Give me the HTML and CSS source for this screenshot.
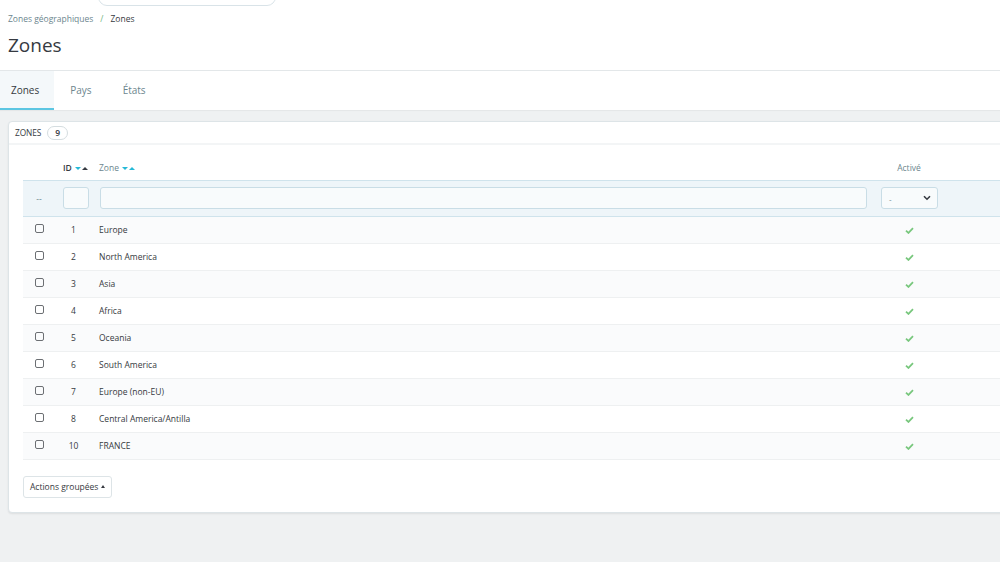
FILE: index.html
```html
<!DOCTYPE html>
<html lang="fr">
<head>
<meta charset="utf-8">
<title>Zones</title>
<link rel="stylesheet" href="styles.css">
</head>
<body>
<header class="page-head">
  <div class="topbar"><div class="search"></div></div>
  <nav class="breadcrumb"><span class="crumb">Zones géographiques</span><span class="sep">/</span><span class="crumb current">Zones</span></nav>
  <h1 class="title">Zones</h1>
</header>
<div class="tabs">
  <a class="tab active">Zones</a>
  <a class="tab">Pays</a>
  <a class="tab">États</a>
</div>
<main class="content">
  <section class="panel">
    <div class="panel-heading">ZONES <span class="badge">9</span></div>
    <table class="grid">
      <colgroup>
        <col class="c-check"><col class="c-id"><col class="c-zone"><col class="c-active"><col class="c-rest">
      </colgroup>
      <thead>
        <tr class="head-row">
          <th></th>
          <th class="th-id"><b>ID</b> <span class="sort"><i class="down"></i><i class="up dark"></i></span></th>
          <th class="th-zone">Zone <span class="sort"><i class="down"></i><i class="up"></i></span></th>
          <th class="th-center">Activé</th>
          <th></th>
        </tr>
        <tr class="filter-row">
          <td class="center muted">--</td>
          <td><div class="input small"></div></td>
          <td><div class="input"></div></td>
          <td><div class="select"><span>-</span><svg width="8" height="6" viewBox="0 0 8 6"><path d="M1 1.2 L4 4.2 L7 1.2" fill="none" stroke="#363a41" stroke-width="1.6"/></svg></div></td>
          <td></td>
        </tr>
      </thead>
      <tbody>
        <tr><td class="center"><span class="cb"></span></td><td class="center">1</td><td>Europe</td><td class="center"><svg class="ok" viewBox="0 0 10 8"><path d="M1 4.2 L3.8 6.8 L9 1.4" fill="none" stroke="#78c77d" stroke-width="2"/></svg></td><td></td></tr>
        <tr><td class="center"><span class="cb"></span></td><td class="center">2</td><td>North America</td><td class="center"><svg class="ok" viewBox="0 0 10 8"><path d="M1 4.2 L3.8 6.8 L9 1.4" fill="none" stroke="#78c77d" stroke-width="2"/></svg></td><td></td></tr>
        <tr><td class="center"><span class="cb"></span></td><td class="center">3</td><td>Asia</td><td class="center"><svg class="ok" viewBox="0 0 10 8"><path d="M1 4.2 L3.8 6.8 L9 1.4" fill="none" stroke="#78c77d" stroke-width="2"/></svg></td><td></td></tr>
        <tr><td class="center"><span class="cb"></span></td><td class="center">4</td><td>Africa</td><td class="center"><svg class="ok" viewBox="0 0 10 8"><path d="M1 4.2 L3.8 6.8 L9 1.4" fill="none" stroke="#78c77d" stroke-width="2"/></svg></td><td></td></tr>
        <tr><td class="center"><span class="cb"></span></td><td class="center">5</td><td>Oceania</td><td class="center"><svg class="ok" viewBox="0 0 10 8"><path d="M1 4.2 L3.8 6.8 L9 1.4" fill="none" stroke="#78c77d" stroke-width="2"/></svg></td><td></td></tr>
        <tr><td class="center"><span class="cb"></span></td><td class="center">6</td><td>South America</td><td class="center"><svg class="ok" viewBox="0 0 10 8"><path d="M1 4.2 L3.8 6.8 L9 1.4" fill="none" stroke="#78c77d" stroke-width="2"/></svg></td><td></td></tr>
        <tr><td class="center"><span class="cb"></span></td><td class="center">7</td><td>Europe (non-EU)</td><td class="center"><svg class="ok" viewBox="0 0 10 8"><path d="M1 4.2 L3.8 6.8 L9 1.4" fill="none" stroke="#78c77d" stroke-width="2"/></svg></td><td></td></tr>
        <tr><td class="center"><span class="cb"></span></td><td class="center">8</td><td>Central America/Antilla</td><td class="center"><svg class="ok" viewBox="0 0 10 8"><path d="M1 4.2 L3.8 6.8 L9 1.4" fill="none" stroke="#78c77d" stroke-width="2"/></svg></td><td></td></tr>
        <tr><td class="center"><span class="cb"></span></td><td class="center">10</td><td>FRANCE</td><td class="center"><svg class="ok" viewBox="0 0 10 8"><path d="M1 4.2 L3.8 6.8 L9 1.4" fill="none" stroke="#78c77d" stroke-width="2"/></svg></td><td></td></tr>
      </tbody>
    </table>
    <div class="bulk"><button class="btn">Actions groupées <span class="caret"></span></button></div>
  </section>
</main>
</body>
</html>
```
FILE: styles.css
```css
* { box-sizing: border-box; }
html, body { margin: 0; padding: 0; }
body {
  width: 1000px;
  height: 562px;
  overflow: hidden;
  background: #eff1f2;
  font-family: "Open Sans", "Noto Sans", sans-serif;
  color: #363a41;
  font-size: 8.5px;
}
.page-head {
  background: #fff;
  border-bottom: 1px solid #e3e7e9;
  padding: 0 0 13px 8px;
  height: 71px;
}
.topbar {
  height: 6px;
  overflow: hidden;
  display: flex;
  align-items: flex-end;
  padding-left: 90px;
}
.search {
  flex-shrink: 0;
  width: 178px;
  height: 26px;
  border: 1px solid #d9e3e8;
  border-radius: 9px;
  background: #fff;
}
.breadcrumb {
  margin-top: 7px;
  height: 12px;
  line-height: 12px;
  font-size: 8.5px;
  color: #6c868e;
  display: flex;
  align-items: center;
}
.breadcrumb .sep { color: #70b580; margin: 0 7px 0 7px; }
.breadcrumb .current { color: #363a41; }
.title {
  margin: 8px 0 0;
  font-size: 19px;
  line-height: 24px;
  font-weight: 400;
  color: #363a41;
}
.tabs {
  background: #fff;
  height: 39px;
  display: flex;
  box-shadow: 0 1px 1px rgba(0,0,0,0.04);
}
.tab {
  display: flex;
  align-items: center;
  padding: 0 15px;
  font-size: 10px;
  color: #6c868e;
  border-bottom: 2px solid transparent;
}
.tab:first-child { padding: 0 15px 0 11px; }
.tab:nth-child(2) { padding: 0 16px 0 16px; }
.tab.active {
  background: #f4f8fa;
  color: #363a41;
  border-bottom-color: #5cc6e2;
}
.content { padding: 11px 0 0 8px; }
.panel {
  width: 1012px;
  background: #fff;
  border: 1px solid #dde4e7;
  border-radius: 4px;
  box-shadow: 0 1px 2px rgba(0,0,0,0.08);
  padding: 0 15px 14px 14px;
}
.panel-heading {
  height: 23px;
  margin: 0 -15px 0 -14px;
  padding: 0 6px;
  display: flex;
  align-items: center;
  border-bottom: 2px solid #f3f5f6;
  font-size: 8.3px;
  font-weight: 400;
  letter-spacing: -0.1px;
  color: #363a41;
}
.badge {
  display: inline-flex;
  align-items: center;
  justify-content: center;
  margin-left: 6px;
  width: 21px;
  height: 14px;
  border: 1px solid #d5dde0;
  border-radius: 8px;
  font-weight: 600;
  font-size: 8.5px;
}
.grid {
  margin-top: 10px;
  width: 100%;
  table-layout: fixed;
  border-collapse: collapse;
}
.c-check { width: 32px; }
.c-id { width: 37px; }
.c-zone { width: 781px; }
.c-active { width: 72px; }
.grid th, .grid td { padding: 0 8px; text-align: left; font-weight: 400; white-space: nowrap; }
.head-row th { height: 25px; color: #6c868e; font-size: 8.5px; }
.th-id { padding-left: 8px !important; }
.th-id b { color: #363a41; font-weight: 600; }
.th-zone { padding-left: 7px !important; }
.th-center { text-align: center !important; }
.sort { display: inline-flex; gap: 1px; vertical-align: middle; margin-left: 1px; }
.sort i { width: 0; height: 0; border-left: 3px solid transparent; border-right: 3px solid transparent; }
.sort .down { border-top: 3.5px solid #25b9d7; }
.sort .up { border-bottom: 3.5px solid #25b9d7; }
.sort .up.dark { border-bottom-color: #363a41; }
.filter-row td {
  height: 36px;
  background: #eef5f9;
  border-top: 1px solid #cfe3ec;
  border-bottom: 1px solid #cfe3ec;
}
.filter-row td:nth-child(3) { padding-left: 8px; padding-right: 6px; }
.muted { color: #6c868e; }
.input {
  height: 22px;
  border: 1px solid #c9dde6;
  border-radius: 3px;
  background: #f8fbfc;
}
.input.small { width: 26px; }
.select {
  width: 57px;
  height: 22px;
  border: 1px solid #c9dde6;
  border-radius: 3px;
  background: #f8fbfc;
  display: flex;
  align-items: center;
  justify-content: space-between;
  padding: 0 6px 0 7px;
  color: #6c868e;
  font-size: 8px;
}
.filter-row td:nth-child(4) { padding-left: 8px; }
tbody td {
  height: 27px;
  border-bottom: 1px solid #eef0f1;
  color: #363a41;
  font-size: 8.5px;
}
tbody tr:nth-child(odd) td { background: #fafbfc; }
tbody td:nth-child(3) { padding-left: 7px; }
.center { text-align: center !important; }
.cb {
  display: inline-block;
  width: 9px;
  height: 9px;
  border: 1px solid #6c6f73;
  border-radius: 2px;
  vertical-align: middle;
  margin-top: -5px;
}
.ok { width: 9px; height: 7px; vertical-align: middle; }
.bulk { margin-top: 16px; }
.btn {
  font-family: inherit;
  font-size: 8.5px;
  color: #363a41;
  background: #fff;
  border: 1px solid #dde4e7;
  border-radius: 3px;
  height: 22px;
  padding: 0 6px;
  display: inline-flex;
  align-items: center;
  gap: 3px;
}
.caret {
  width: 0; height: 0;
  border-left: 2.5px solid transparent;
  border-right: 2.5px solid transparent;
  border-bottom: 3px solid #363a41;
}
```
